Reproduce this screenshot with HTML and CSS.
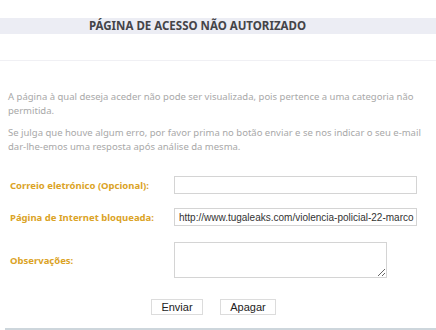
FILE: index.html
```html
<!DOCTYPE html>
<html>
<head>
<meta charset="UTF-8">
<title>Página de acesso não autorizado</title>
<link rel="stylesheet" href="styles.css">
</head>
<body>
<div class="top"></div>
<div class="title_bar">
	<h1 class="title">PÁGINA DE ACESSO NÃO AUTORIZADO</h1>
</div>
<div class="sep"></div>
<div class="content">
	<p class="msg">A página à qual deseja aceder não pode ser visualizada, pois pertence a uma categoria não permitida.</p>
	<p class="msg">Se julga que houve algum erro, por favor prima no botão enviar e se nos indicar o seu e-mail dar-lhe-emos uma resposta após análise da mesma.</p>
	<form class="form">
		<div class="row">
			<label class="lbl">Correio eletrónico (Opcional):</label>
			<input type="text" class="field" />
		</div>
		<div class="row row_url">
			<label class="lbl">Página de Internet bloqueada:</label>
			<input type="text" class="field" value="http://www.tugaleaks.com/violencia-policial-22-marco" />
		</div>
		<div class="row row_obs">
			<label class="lbl">Observações:</label>
			<textarea class="obs"></textarea>
		</div>
		<div class="buttons">
			<input type="button" class="btn btn_send" value="Enviar" />
			<input type="button" class="btn btn_clear" value="Apagar" />
		</div>
	</form>
</div>
<div class="bottom"></div>
</body>
</html>
```

FILE: styles.css
```css
body {
	margin: 0;
	background-color: #ffffff;
	font-family: "Noto Sans", Tahoma, sans-serif;
}
.top {
	height: 18px;
}
.title_bar {
	height: 16px;
	background-color: #ecedf4;
	padding-left: 89px;
}
.title {
	margin: 0;
	font-size: 11.5px;
	line-height: 16px;
	font-weight: bold;
	color: #444448;
}
.sep {
	height: 1px;
	margin-top: 26px;
	background-color: #f0f0f4;
}
.content {
	padding: 29px 0 0 8px;
}
.msg {
	margin: 0 0 8px 0;
	width: 420px;
	font-size: 9.5px;
	line-height: 14px;
	color: #a8a8a8;
}
.form {
	margin-top: 22px;
}
.row {
	display: flex;
	align-items: center;
	height: 18px;
	margin-bottom: 14px;
}
.row_url {
	margin-bottom: 16px;
}
.row_obs {
	height: 36px;
	margin-bottom: 21px;
}
.lbl {
	width: 164px;
	padding-left: 2px;
	font-size: 9.5px;
	font-weight: bold;
	color: #dba326;
}
.field {
	box-sizing: border-box;
	width: 243px;
	height: 18px;
	margin: 0;
	padding: 0 2px 0 4px;
	border: 1px solid #d4d4d4;
	font-family: "Liberation Sans", Arial, sans-serif;
	font-size: 10px;
	color: #333333;
}
.obs {
	box-sizing: border-box;
	width: 213px;
	height: 36px;
	margin: 0;
	border: 1px solid #d4d4d4;
}
.buttons {
	display: flex;
	gap: 17px;
	padding-left: 143px;
}
.btn {
	box-sizing: border-box;
	height: 16px;
	margin: 0;
	padding: 0;
	border: 1px solid #dcdcdc;
	background-color: #ffffff;
	font-family: "Liberation Sans", Arial, sans-serif;
	font-size: 11px;
	line-height: 14px;
	color: #222222;
}
.btn_send {
	width: 52px;
}
.btn_clear {
	width: 56px;
}
.bottom {
	height: 2px;
	margin: 13px 0 0 5px;
	background-color: #cdd6dc;
}
```
